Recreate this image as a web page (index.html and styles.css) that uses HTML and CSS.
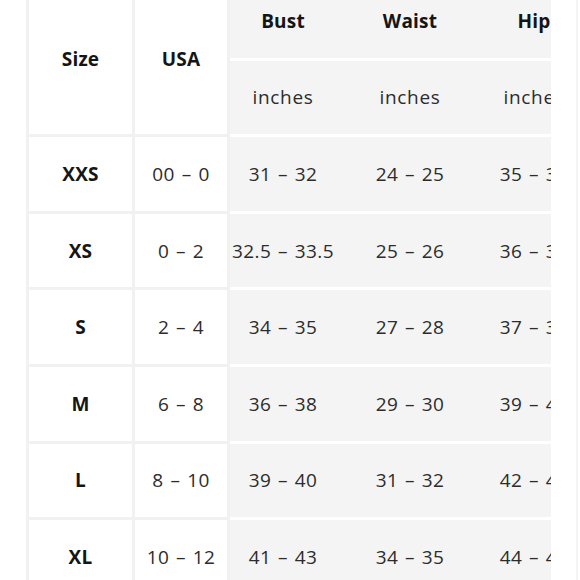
FILE: index.html
```html
<!DOCTYPE html>
<html>
<head>
<meta charset="utf-8">
<link rel="stylesheet" href="styles.css">
</head>
<body>
<div class="page">
  <div class="scroller">
    <div class="chart">
      <div class="cell head fixed span2">Size</div>
      <div class="cell head fixed span2">USA</div>
      <div class="cell head grey">Bust</div>
      <div class="cell head grey">Waist</div>
      <div class="cell head grey">Hip</div>
      <div class="cell grey unit">inches</div>
      <div class="cell grey unit">inches</div>
      <div class="cell grey unit">inches</div>

      <div class="cell head fixed">XXS</div>
      <div class="cell fixed">00 – 0</div>
      <div class="cell grey">31 – 32</div>
      <div class="cell grey">24 – 25</div>
      <div class="cell grey">35 – 36</div>

      <div class="cell head fixed">XS</div>
      <div class="cell fixed">0 – 2</div>
      <div class="cell grey">32.5 – 33.5</div>
      <div class="cell grey">25 – 26</div>
      <div class="cell grey">36 – 37</div>

      <div class="cell head fixed">S</div>
      <div class="cell fixed">2 – 4</div>
      <div class="cell grey">34 – 35</div>
      <div class="cell grey">27 – 28</div>
      <div class="cell grey">37 – 38</div>

      <div class="cell head fixed">M</div>
      <div class="cell fixed">6 – 8</div>
      <div class="cell grey">36 – 38</div>
      <div class="cell grey">29 – 30</div>
      <div class="cell grey">39 – 41</div>

      <div class="cell head fixed">L</div>
      <div class="cell fixed">8 – 10</div>
      <div class="cell grey">39 – 40</div>
      <div class="cell grey">31 – 32</div>
      <div class="cell grey">42 – 43</div>

      <div class="cell head fixed">XL</div>
      <div class="cell fixed">10 – 12</div>
      <div class="cell grey">41 – 43</div>
      <div class="cell grey">34 – 35</div>
      <div class="cell grey">44 – 45</div>
    </div>
  </div>
  <div class="edge"></div>
</div>
</body>
</html>
```

FILE: styles.css
```css
html, body {
  margin: 0;
  padding: 0;
  background: #ffffff;
}

body {
  width: 580px;
  height: 580px;
  overflow: hidden;
  font-family: "Open Sans", "Noto Sans", sans-serif;
  color: #2c2c2c;
}

.page {
  display: flex;
  height: 580px;
  overflow: hidden;
}

.scroller {
  margin-left: 26px;
  width: 525px;
  overflow: hidden;
  flex: none;
}

.chart {
  margin-top: -16px;
  display: grid;
  grid-template-columns: 109px 95px 106px 148px 100px;
  grid-auto-rows: 76.6px;
  width: 558px;
}

.cell {
  display: flex;
  align-items: center;
  justify-content: center;
  font-size: 19px;
  letter-spacing: 0.4px;
  word-spacing: 1.5px;
  white-space: nowrap;
  box-sizing: border-box;
}

.unit {
  letter-spacing: 0.7px;
  word-spacing: 0;
}

.fixed {
  background: #ffffff;
  border-right: 3px solid #f1f1f1;
  border-bottom: 3px solid #f1f1f1;
}

.fixed:nth-child(5n + 9),
.span2:first-child {
  border-left: 3px solid #f1f1f1;
}

.grey {
  background: #f4f4f4;
  border-bottom: 3px solid #ffffff;
}

.span2 {
  grid-row: span 2;
}

.head {
  font-weight: 700;
  letter-spacing: 0.2px;
  word-spacing: 0;
  color: #151515;
}

.edge {
  margin-left: 25px;
  width: 2px;
  background: #f4f4f4;
  flex: none;
}
```
